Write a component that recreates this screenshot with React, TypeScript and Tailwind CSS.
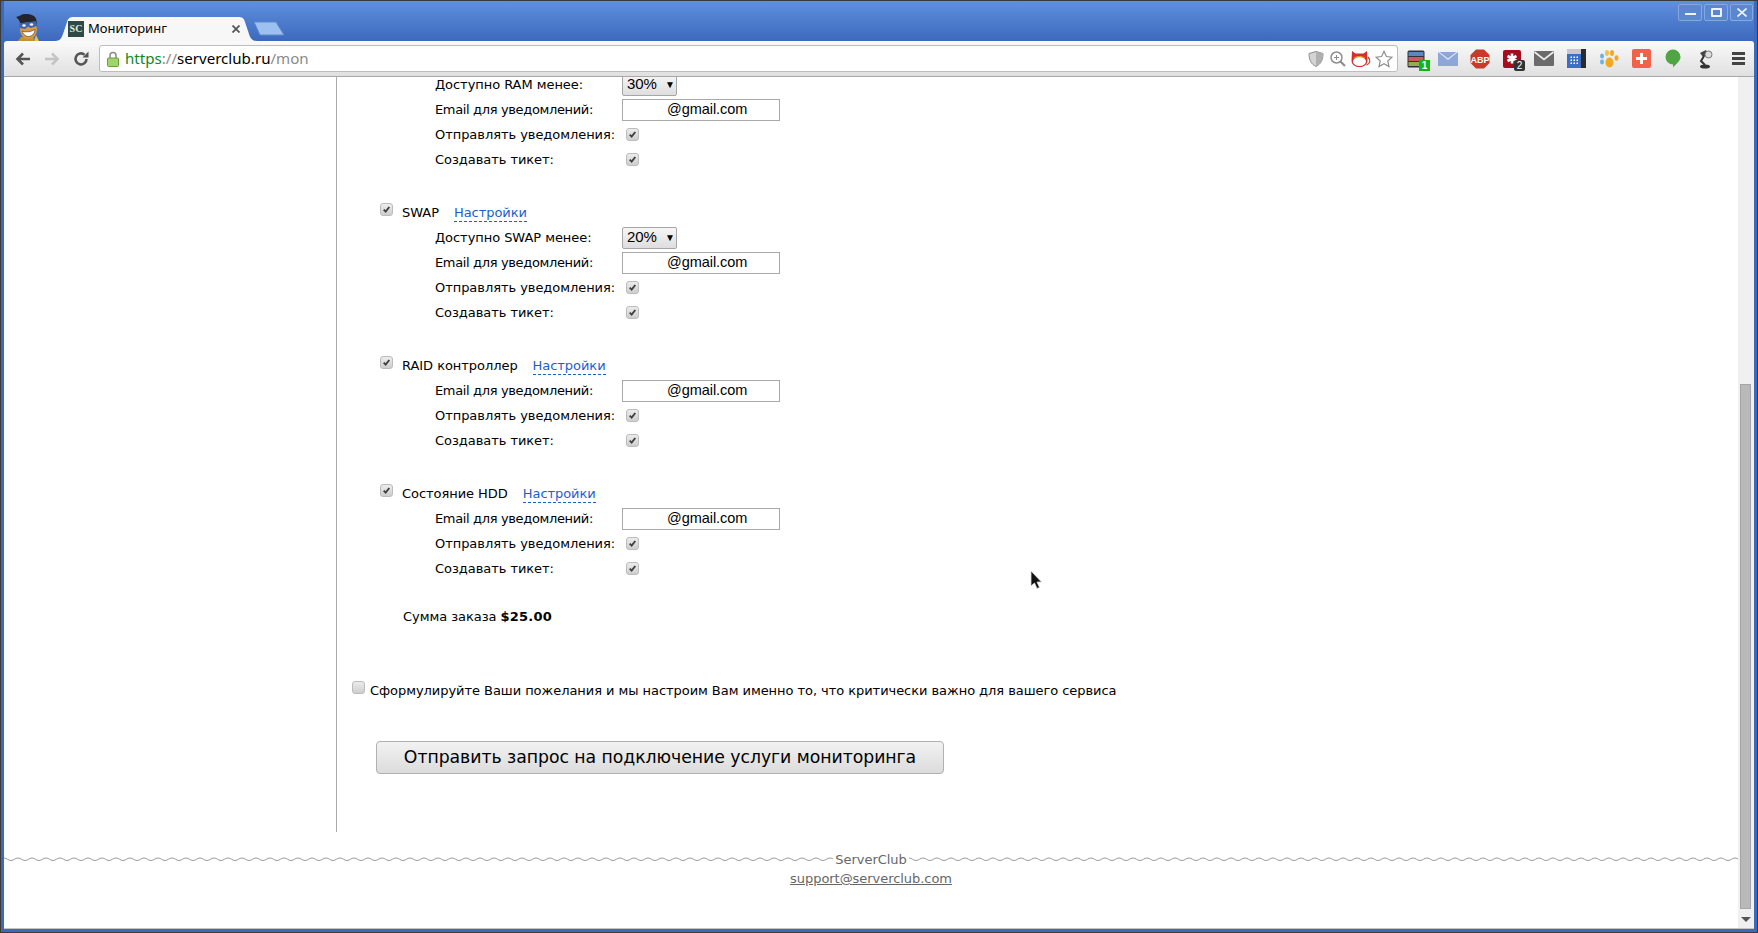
import type { ReactNode } from "react";

function Tick() {
  return (
    <svg viewBox="0 0 13 13" className="w-[13px] h-[13px]">
      <path d="M3.200 6.600 L5.500 9 L9.800 3.500" fill="none" stroke="#3f3f3f" strokeWidth="2.200" />
    </svg>
  );
}

function Checkbox({ checked = true }: { checked?: boolean }) {
  return (
    <div className="w-[13px] h-[13px] rounded-[3px] border border-[#bcbcbc] bg-gradient-to-b from-[#ececec] to-[#cecece] flex items-center justify-center shrink-0">
      {checked && <Tick />}
    </div>
  );
}

function FakeSelect({ value }: { value: string }) {
  return (
    <div className="w-[55px] h-[22px] rounded-[2px] border border-[#a6a6a6] bg-gradient-to-b from-[#f6f6f6] to-[#dedede] flex items-center pl-[4px] gap-[8px] text-[15px] text-black font-['Liberation_Sans',sans-serif]">
      <span>{value}</span>
      <span className="text-[10px] leading-none">▼</span>
    </div>
  );
}

function EmailInput() {
  return (
    <div className="w-[158px] h-[22px] border border-[#a9a9a9] bg-white pl-[44px] flex items-center text-[14.500px] text-black font-['Liberation_Sans',sans-serif]">
      @gmail.com
    </div>
  );
}

function Row({ label, children, narrow = false }: { label: string; children: ReactNode; narrow?: boolean }) {
  return (
    <div className="h-[25px] pl-[98px] flex items-center">
      <div className={narrow ? "w-[187px] shrink-0 tracking-[-0.35px]" : "w-[187px] shrink-0"}>{label}</div>
      {children}
    </div>
  );
}

function EmailRow() {
  return (
    <Row label="Email для уведомлений:" narrow>
      <EmailInput />
    </Row>
  );
}

function CheckRow({ label }: { label: string }) {
  return (
    <Row label={label}>
      <div className="pl-[4px]">
        <Checkbox />
      </div>
    </Row>
  );
}

function GroupHead({ title }: { title: string }) {
  return (
    <div className="h-[25px] pl-[43px] flex items-center mt-[28px]">
      <div className="-mt-[7px]">
        <Checkbox />
      </div>
      <span className="ml-[9px]">{title}</span>
      <span className="ml-[15px] text-[#1a5fd0] border-b border-dashed border-[#1a5fd0] leading-[17px]">Настройки</span>
    </div>
  );
}

function Mascot() {
  return (
    <svg viewBox="0 0 26 27" className="w-[26px] h-[27px] shrink-0">
      <path d="M19 27 L24 27 L21 21 Z" fill="#e8c34a" />
      <path d="M3 27 L20 27 L18 22 L6 23 Z" fill="#c4922f" />
      <path d="M5 9 L20 7 L22 15 C22 21 18 25 13 25 C8 25 5 20 5 15 Z" fill="#d79a45" />
      <path d="M1 3 C4 2 5 2 6 1 C10 -1 17 0 20 3 C22 6 22 9 21 12 L19 8 L7 9 L6 11 C5 8 4 5 1 3 Z" fill="#24242c" />
      <path d="M4 9.500 L21 7 L21.500 12 L16 14 L13 12.500 L10 15 L5 14 Z" fill="#3b64b4" />
      <ellipse cx="9" cy="11.500" rx="1.800" ry="1.200" fill="#f2f2f2" />
      <ellipse cx="16.500" cy="10.500" rx="1.800" ry="1.200" fill="#f2f2f2" />
      <path d="M7 17 C10 18.500 16 18 20 15.500 C20 20 16 23 12.500 22.500 C10 22 8 20 7 17 Z" fill="#fff" stroke="#6b4318" strokeWidth="0.700" />
    </svg>
  );
}

function Toolbar() {
  return (
    <div className="h-[36px] flex items-center bg-gradient-to-b from-[#fafafa] to-[#e0e0e0] border-b border-[#a8a8a8] rounded-t-[3px] shrink-0">
      <svg viewBox="0 0 16 14" className="w-[16px] h-[14px] ml-[11px]">
        <path d="M15 7 H3 M8 1.500 L2.500 7 L8 12.500" fill="none" stroke="#555" strokeWidth="2.600" />
      </svg>
      <svg viewBox="0 0 16 14" className="w-[16px] h-[14px] ml-[13px]">
        <path d="M1 7 H13 M8 1.500 L13.500 7 L8 12.500" fill="none" stroke="#c4c4c4" strokeWidth="2.600" />
      </svg>
      <svg viewBox="0 0 16 16" className="w-[16px] h-[16px] ml-[13px]">
        <path d="M13.500 8 A5.500 5.500 0 1 1 11.500 3.700" fill="none" stroke="#555" strokeWidth="2.600" />
        <path d="M9.500 6.500 L15.500 6.500 L15.500 0.500 Z" fill="#555" />
      </svg>
      <div className="ml-[10px] h-[27px] w-[1299px] bg-white border border-[#bdbdbd] rounded-[3px] flex items-center pl-[7px] pr-[4px] text-[15.100px] font-['Noto_Sans',sans-serif]">
        <svg viewBox="0 0 12 16" className="w-[12px] h-[16px]">
          <path d="M3 7 V4.500 A3 3 0 0 1 9 4.500 V7" fill="none" stroke="#8a8a8a" strokeWidth="1.500" />
          <rect x="0.500" y="7" width="11" height="8.500" rx="1" fill="#9fd66a" stroke="#6d9e3c" />
        </svg>
        <span className="ml-[6px] text-[#0b8a1f]">https</span>
        <span className="text-[#8a8a8a]">://</span>
        <span className="text-black">serverclub.ru</span>
        <span className="text-[#8a8a8a]">/mon</span>
        <div className="ml-auto flex items-center gap-[4px]">
          <svg viewBox="0 0 18 18" className="w-[18px] h-[18px]">
            <path d="M9 1.500 L16 3.500 C16 10 14 14 9 16.500 C4 14 2 10 2 3.500 Z" fill="#d4d4d4" stroke="#8d8d8d" />
            <path d="M9 1.500 L16 3.500 C16 10 14 14 9 16.500 Z" fill="#b0b0b0" />
          </svg>
          <svg viewBox="0 0 18 18" className="w-[18px] h-[18px]">
            <circle cx="7.500" cy="7.500" r="5.500" fill="#fff" stroke="#8d8d8d" strokeWidth="1.500" />
            <path d="M11.500 11.500 L16 16" stroke="#8d8d8d" strokeWidth="2.200" />
            <path d="M5 7.500 H10 M7.500 5 V10" stroke="#8d8d8d" />
          </svg>
          <svg viewBox="0 0 20 18" className="w-[20px] h-[18px]">
            <path d="M1 1 L4.500 3.500 H12.500 L16 1 L16.500 11 C16 15 12.500 17 8.500 17 C4.500 17 1 15 0.500 11 Z" fill="#d2302a" />
            <ellipse cx="8.500" cy="11.500" rx="6.500" ry="4.500" fill="#fff" />
            <path d="M3 8 C6 6 11 6 14 8" fill="none" stroke="#f0a020" strokeWidth="1" />
            <path d="M17 7 C20 10 19 14 15.500 15" fill="none" stroke="#d2302a" strokeWidth="1.200" />
          </svg>
          <svg viewBox="0 0 20 20" className="w-[18px] h-[18px]">
            <path d="M10 1.500 L12.600 7.300 L18.800 8 L14.200 12.200 L15.500 18.400 L10 15.200 L4.500 18.400 L5.800 12.200 L1.200 8 L7.400 7.300 Z" fill="#fff" stroke="#8d8d8d" strokeWidth="1.300" />
          </svg>
        </div>
      </div>
      <div className="ml-[2px] flex items-center">
        <div className="w-[32px] flex justify-center relative">
          <svg viewBox="0 0 18 18" className="w-[18px] h-[18px]">
            <rect x="0.500" y="0.500" width="17" height="17" rx="1.500" fill="#333" />
            <rect x="1.500" y="2" width="15" height="4" fill="#5f86c0" />
            <rect x="1.500" y="7" width="15" height="4" fill="#c85a6a" />
            <rect x="1.500" y="12" width="15" height="4" fill="#93ad4f" />
          </svg>
          <span className="absolute left-[19px] top-[10px] w-[11px] h-[11px] bg-[#12b31a] text-white text-[10px] leading-[11px] text-center font-bold font-['Liberation_Sans',sans-serif]">1</span>
        </div>
        <div className="w-[32px] flex justify-center">
          <svg viewBox="0 0 20 14" className="w-[20px] h-[14px]">
            <rect width="20" height="14" fill="#8fa7d8" />
            <path d="M0 0 L10 8 L20 0" fill="#e4eaf8" />
            <path d="M1.500 0 L10 6.500 L18.500 0 Z" fill="#8fa7d8" />
          </svg>
        </div>
        <div className="w-[32px] flex justify-center">
          <svg viewBox="0 0 20 20" className="w-[20px] h-[20px]">
            <path d="M6 0.500 H14 L19.500 6 V14 L14 19.500 H6 L0.500 14 V6 Z" fill="#c83a2a" />
            <text x="10" y="13.500" textAnchor="middle" fontSize="9" fontWeight="bold" fill="#fff" fontFamily="Liberation Sans">ABP</text>
          </svg>
        </div>
        <div className="w-[32px] flex justify-center relative">
          <svg viewBox="0 0 18 18" className="w-[18px] h-[18px]">
            <rect width="18" height="18" rx="2" fill="#a30d1c" />
            <path d="M9 3.500 V13.500 M4.500 6 L13.500 11 M13.500 6 L4.500 11" stroke="#fff" strokeWidth="2.600" />
          </svg>
          <span className="absolute left-[18px] top-[10px] w-[11px] h-[11px] rounded-[2px] bg-[#333] text-white text-[10px] leading-[11px] text-center font-['Liberation_Sans',sans-serif]">2</span>
        </div>
        <div className="w-[32px] flex justify-center">
          <svg viewBox="0 0 20 15" className="w-[20px] h-[15px]">
            <rect width="20" height="15" rx="1" fill="#6b6b6b" />
            <path d="M0.500 1 L10 8.500 L19.500 1" fill="none" stroke="#eee" strokeWidth="1.600" />
          </svg>
        </div>
        <div className="w-[32px] flex justify-center">
          <svg viewBox="0 0 19 19" className="w-[19px] h-[19px]">
            <rect width="14" height="19" fill="#3a6fc4" />
            <rect width="14" height="5" fill="#c8c8c8" />
            <rect x="14" width="5" height="19" fill="#2b2b2b" />
            <path d="M3.500 7.500 H5 V9 H3.500 Z M6.500 7.500 H8 V9 H6.500 Z M9.500 7.500 H11 V9 H9.500 Z M3.500 10.500 H5 V12 H3.500 Z M6.500 10.500 H8 V12 H6.500 Z M9.500 10.500 H11 V12 H9.500 Z M3.500 13.500 H5 V15 H3.500 Z M6.500 13.500 H8 V15 H6.500 Z M9.500 13.500 H11 V15 H9.500 Z" fill="#fff" />
          </svg>
        </div>
        <div className="w-[33px] flex justify-center">
          <svg viewBox="0 0 20 18" className="w-[20px] h-[18px]">
            <ellipse cx="10.500" cy="12.500" rx="4" ry="5" fill="#f2a922" />
            <ellipse cx="3" cy="6" rx="2" ry="2.600" fill="#6fb1e6" />
            <ellipse cx="3" cy="12" rx="2" ry="2.400" fill="#6fb1e6" />
            <ellipse cx="8" cy="3" rx="2" ry="3" fill="#f2c14e" />
            <ellipse cx="13" cy="3" rx="2" ry="3" fill="#f2a922" />
            <ellipse cx="17.500" cy="8" rx="2" ry="2.800" fill="#f2a922" />
          </svg>
        </div>
        <div className="w-[32px] flex justify-center">
          <svg viewBox="0 0 19 19" className="w-[19px] h-[19px]">
            <rect width="19" height="19" rx="2" fill="#f0624c" />
            <path d="M9.500 4 V15 M4 9.500 H15" stroke="#fff" strokeWidth="3" />
          </svg>
        </div>
        <div className="w-[31px] flex justify-center">
          <svg viewBox="0 0 16 19" className="w-[16px] h-[19px]">
            <path d="M8 0.500 A7.500 7.500 0 0 1 15.500 8 C15.500 12 11 15 8 18.500 L8 15.500 A7.500 7.500 0 0 1 8 0.500 Z" fill="#4fa444" />
          </svg>
        </div>
        <div className="w-[34px] flex justify-center">
          <svg viewBox="0 0 16 20" className="w-[16px] h-[20px]">
            <path d="M3 4 L9 1 L11 6 L6 8 Z" fill="#444" />
            <circle cx="11.500" cy="5.500" r="3.500" fill="#ddd" stroke="#777" />
            <path d="M7 7 L4 12 L8 16" fill="none" stroke="#333" strokeWidth="2" />
            <ellipse cx="8" cy="17.500" rx="5" ry="2" fill="#333" />
          </svg>
        </div>
        <div className="w-[32px] flex justify-center">
          <div className="w-[13px] flex flex-col gap-[2px]">
            <div className="h-[3px] bg-[#444]" />
            <div className="h-[3px] bg-[#444]" />
            <div className="h-[3px] bg-[#444]" />
          </div>
        </div>
      </div>
    </div>
  );
}

function TitleBar() {
  return (
    <div className="h-[40px] shrink-0 flex items-end pl-[11px] bg-gradient-to-b from-[#5f90de] to-[#3d69bd] relative">
      <Mascot />
      <div className="relative w-[202px] h-[24px] ml-[14px] flex items-center">
        <svg viewBox="0 0 202 24" className="absolute inset-0 w-[202px] h-[24px]">
          <path d="M0 24 C6 24 7 20 9 14 L12 5 C13 1 15 0 19 0 H183 C187 0 189 1 190 5 L193 14 C195 20 196 24 202 24 Z" fill="#f7f7f7" />
        </svg>
        <div className="relative ml-[13px] w-[16px] h-[16px] bg-[#2f4a45] text-[#dfe8e4] text-[10px] leading-[16px] text-center font-bold font-['Liberation_Serif',serif]">SC</div>
        <span className="relative ml-[4px] text-[13px] text-black font-['Noto_Sans',sans-serif]">Мониторинг</span>
        <svg viewBox="0 0 8 8" className="absolute left-[177px] top-[8px] w-[8px] h-[8px]">
          <path d="M0.500 0.500 L7.500 7.500 M7.500 0.500 L0.500 7.500" stroke="#555" strokeWidth="1.800" />
        </svg>
      </div>
      <svg viewBox="0 0 32 15" className="w-[32px] h-[15px] -ml-[4px] mb-[5px] shrink-0">
        <path d="M1 1 H23 L31 14 H7 Z" fill="#9cc0ef" stroke="#5f88cc" />
      </svg>
      <div className="absolute right-[1px] top-[3px] flex gap-[2px]">
        <div className="w-[24px] h-[17px] border border-[#86a8e0] rounded-[2px] flex items-center justify-center bg-[#5a87d0]">
          <div className="w-[11px] h-[2px] bg-[#eef3fb] mt-[3px]" />
        </div>
        <div className="w-[24px] h-[17px] border border-[#86a8e0] rounded-[2px] flex items-center justify-center bg-[#5a87d0]">
          <div className="w-[11px] h-[9px] border-2 border-[#eef3fb] rounded-[1px]" />
        </div>
        <div className="w-[23px] h-[17px] border border-[#86a8e0] rounded-[2px] flex items-center justify-center bg-[#5a87d0]">
          <svg viewBox="0 0 10 9" className="w-[10px] h-[9px]">
            <path d="M0.500 0.500 L9.500 8.500 M9.500 0.500 L0.500 8.500" stroke="#eef3fb" strokeWidth="1.600" />
          </svg>
        </div>
      </div>
    </div>
  );
}

function Wave({ id }: { id: string }) {
  return (
    <svg className="flex-1 h-[6px]">
      <defs>
        <pattern id={id} width="14" height="6" patternUnits="userSpaceOnUse">
          <path d="M0 2 C3 2 4 4.500 7 4.500 C10 4.500 11 2 14 2" fill="none" stroke="#999" strokeWidth="1" />
        </pattern>
      </defs>
      <rect width="100%" height="6" fill={`url(#${id})`} />
    </svg>
  );
}

function Scrollbar() {
  return (
    <div className="w-[16px] shrink-0 bg-[#f0f0f0] relative pl-[2px]">
      <div className="absolute left-[2px] top-[307px] w-[11px] h-[525px] bg-[#b9b9b9] border border-[#a5a5a5]" />
      <div className="absolute left-[3px] bottom-[6px] w-0 h-0 border-x-[5px] border-x-transparent border-t-[5px] border-t-[#555]" />
    </div>
  );
}

function Content() {
  return (
    <div className="flex-1 bg-white overflow-hidden font-['DejaVu_Sans',sans-serif] text-[13px] tracking-[-0.05px] text-black relative">
      <div className="flex h-[755px]">
        <div className="w-[332px] shrink-0" />
        <div className="flex-1 border-l border-[#aaaaaa] -mt-[5px]">
          <Row label="Доступно RAM менее:">
            <FakeSelect value="30%" />
          </Row>
          <EmailRow />
          <CheckRow label="Отправлять уведомления:" />
          <CheckRow label="Создавать тикет:" />

          <GroupHead title="SWAP" />
          <Row label="Доступно SWAP менее:">
            <FakeSelect value="20%" />
          </Row>
          <EmailRow />
          <CheckRow label="Отправлять уведомления:" />
          <CheckRow label="Создавать тикет:" />

          <GroupHead title="RAID контроллер" />
          <EmailRow />
          <CheckRow label="Отправлять уведомления:" />
          <CheckRow label="Создавать тикет:" />

          <GroupHead title="Состояние HDD" />
          <EmailRow />
          <CheckRow label="Отправлять уведомления:" />
          <CheckRow label="Создавать тикет:" />

          <div className="h-[25px] mt-[23px] pl-[66px] flex items-center">
            Сумма заказа&nbsp;<b className="tracking-[0.2px]">$25.00</b>
          </div>

          <div className="h-[25px] mt-[49px] pl-[15px] flex items-center">
            <div className="-mt-[7px]">
              <Checkbox checked={false} />
            </div>
            <span className="ml-[5px]">
              Сформулируйте Ваши пожелания и мы настроим Вам именно то, что критически важно для вашего сервиса
            </span>
          </div>

          <button className="block ml-[39px] mt-[38px] w-[568px] h-[33px] rounded-[4px] border border-[#b0b0b0] bg-gradient-to-b from-[#f2f2f2] to-[#dcdcdc] text-[17.300px] text-black">
            Отправить запрос на подключение услуги мониторинга
          </button>
        </div>
      </div>

      <div className="flex items-center h-[20px] mt-[17px] text-[#666]">
        <Wave id="wave-left" />
        <span className="px-[2px] leading-none">ServerClub</span>
        <Wave id="wave-right" />
      </div>
      <div className="text-center text-[#666] underline leading-[20px]">support@serverclub.com</div>

      {/* mouse pointer */}
      <svg viewBox="0 0 13 20" className="absolute left-[1026px] top-[493px] w-[13px] h-[20px]">
        <path d="M1 1 V16 L4.500 13 L7 18.500 L9.500 17.500 L7 12 L11.500 12 Z" fill="#111" stroke="#ddd" strokeWidth="0.800" />
      </svg>
    </div>
  );
}

export default function App() {
  return (
    <div className="w-[1758px] h-[933px] overflow-hidden bg-[#3d69bd] border border-[#3a3a3a] flex flex-col">
      <div className="flex-1 flex flex-col mx-[3px] mb-[3px] min-h-0">
        <TitleBar />
        <Toolbar />
        <div className="flex-1 flex min-h-0 border-b border-[#c4c4c4]">
          <Content />
          <Scrollbar />
        </div>
      </div>
    </div>
  );
}
